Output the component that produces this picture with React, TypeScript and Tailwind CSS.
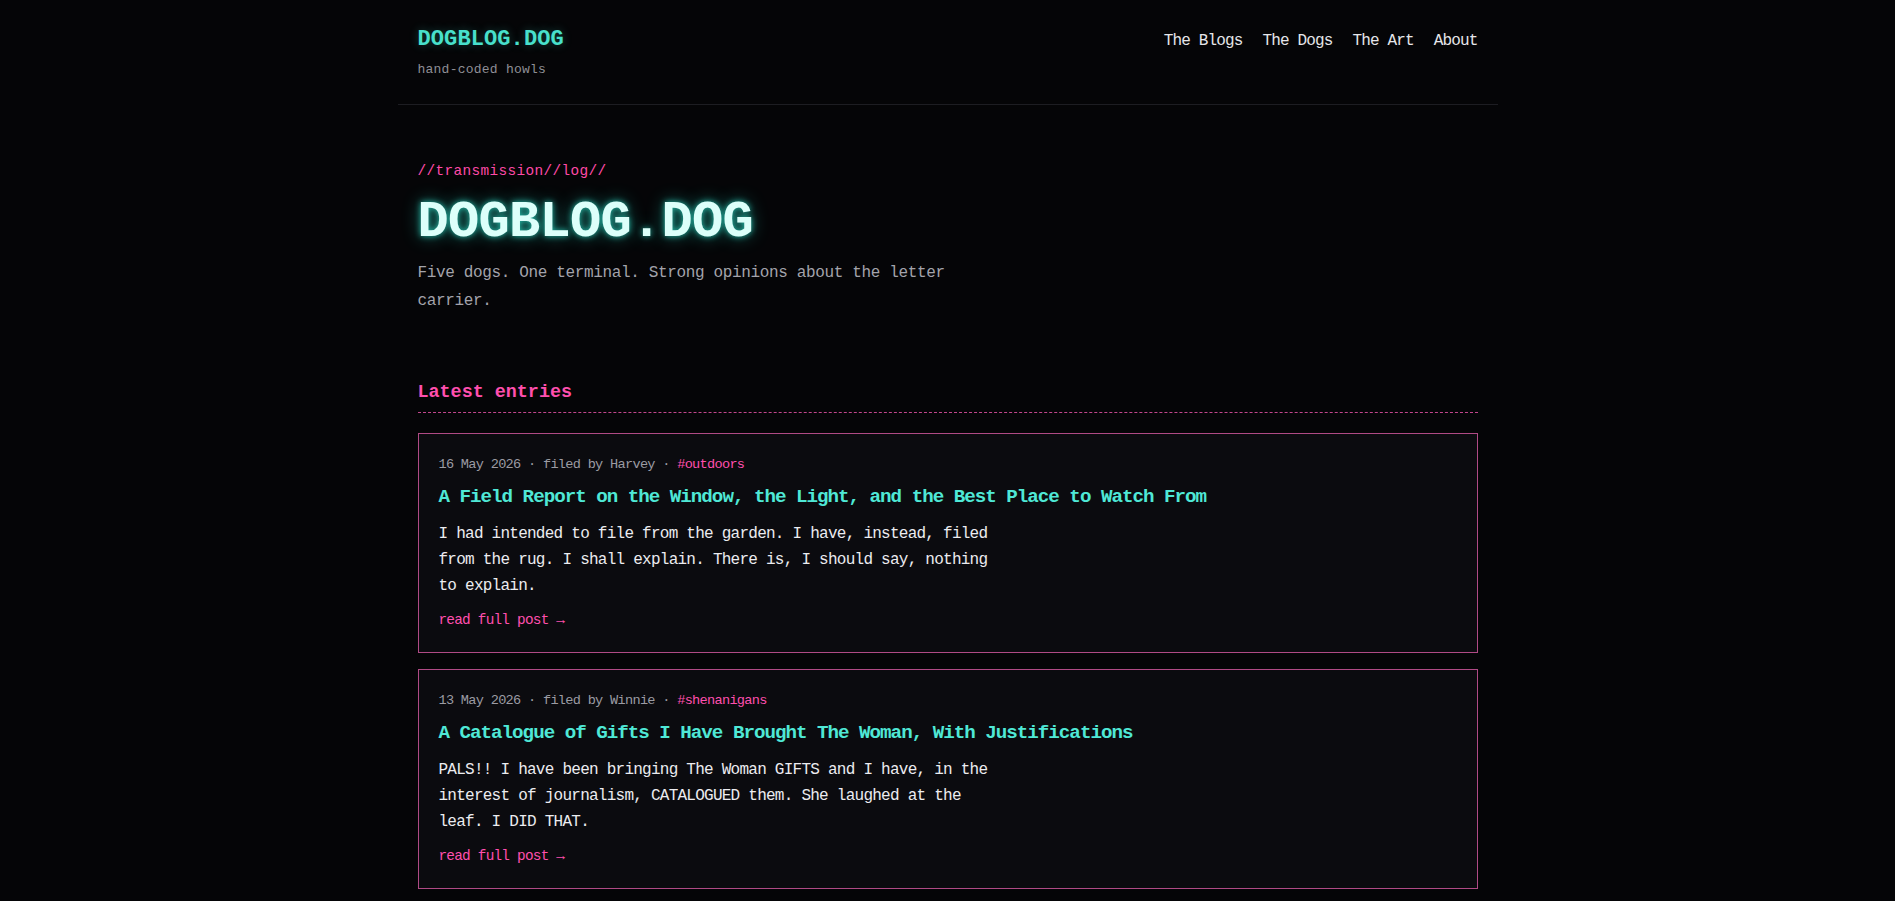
type Post = {
  date: string;
  author: string;
  tag: string;
  title: string;
  excerpt: string;
};

const posts: Post[] = [
  {
    date: "16 May 2026",
    author: "Harvey",
    tag: "#outdoors",
    title: "A Field Report on the Window, the Light, and the Best Place to Watch From",
    excerpt:
      "I had intended to file from the garden. I have, instead, filed from the rug. I shall explain. There is, I should say, nothing to explain.",
  },
  {
    date: "13 May 2026",
    author: "Winnie",
    tag: "#shenanigans",
    title: "A Catalogue of Gifts I Have Brought The Woman, With Justifications",
    excerpt:
      "PALS!! I have been bringing The Woman GIFTS and I have, in the interest of journalism, CATALOGUED them. She laughed at the leaf. I DID THAT.",
  },
];

const navLinks = ["The Blogs", "The Dogs", "The Art", "About"];

export default function App() {
  return (
    <div className="min-h-screen bg-[#050507] font-['Liberation_Mono','DejaVu_Sans_Mono',monospace] text-[#e6e6ea]">
      <div className="mx-auto max-w-[1100px]">
        <header className="flex items-start justify-between border-b border-[#1d1d22] px-5 pb-6 pt-[27px]">
          <div>
            <a
              href="#"
              className="block text-[22px] font-bold leading-[1.2] tracking-[0.1px] text-[#48e0cc] [text-shadow:0_0_10px_rgba(72,224,204,0.3)]"
            >
              DOGBLOG.DOG
            </a>
            <p className="mt-[7px] text-[13px] leading-[1.5] tracking-[0.24px] text-[#8f8f96]">
              hand-coded howls
            </p>
          </div>
          <nav className="flex gap-5 pt-[2px] text-[16px] leading-6 tracking-[-0.85px] text-[#e6e6ea]">
            {navLinks.map((link) => (
              <a key={link} href="#" className="hover:text-[#48e0cc]">
                {link}
              </a>
            ))}
          </nav>
        </header>

        <main className="px-5 pb-16">
          <section className="pt-14">
            <p className="text-[14.4px] leading-[1.5] tracking-[0.36px] text-[#ff4aa8]">
              //transmission//log//
            </p>
            <h1 className="mt-[11px] text-[52px] font-bold leading-[1.1] tracking-[-0.7px] text-[#dcfffa] [text-shadow:0_0_6px_rgba(46,230,208,0.8),0_0_18px_rgba(46,230,208,0.45)]">
              DOGBLOG.DOG
            </h1>
            <p className="mt-2 max-w-[560px] text-[16px] leading-[1.8] tracking-[-0.35px] text-[#a3a3ab]">
              Five dogs. One terminal. Strong opinions about the letter carrier.
            </p>
          </section>

          <section className="mt-16">
            <h2 className="border-b border-dashed border-[#c2468c] pb-[6px] text-[18.4px] font-bold leading-[1.4] text-[#ff4fae]">
              Latest entries
            </h2>
            <div className="mt-5 flex flex-col gap-4">
              {posts.map((post) => (
                <PostCard key={post.title} post={post} />
              ))}
            </div>
          </section>
        </main>
      </div>
    </div>
  );
}

function PostCard({ post }: { post: Post }) {
  return (
    <article className="border border-[#b04a85] bg-[#0b0b0f] px-5 pb-5 pt-[21px]">
      <p className="text-[13.6px] leading-[1.5] tracking-[-0.7px] text-[#9b9ba3]">
        {post.date} · filed by {post.author} ·{" "}
        <span className="text-[#ff4fae]">{post.tag}</span>
      </p>
      <h3 className="mt-[9px] text-[19.2px] font-bold leading-[1.4] tracking-[-1px] text-[#4fe8d6]">
        <a href="#">{post.title}</a>
      </h3>
      <p className="mt-2.5 max-w-[560px] text-[16px] leading-[26px] tracking-[-0.75px] text-[#ececf0]">
        {post.excerpt}
      </p>
      <a
        href="#"
        className="mt-[11px] block text-[14.4px] leading-[1.5] tracking-[-0.78px] text-[#ff4fae]"
      >
        read full post →
      </a>
    </article>
  );
}
